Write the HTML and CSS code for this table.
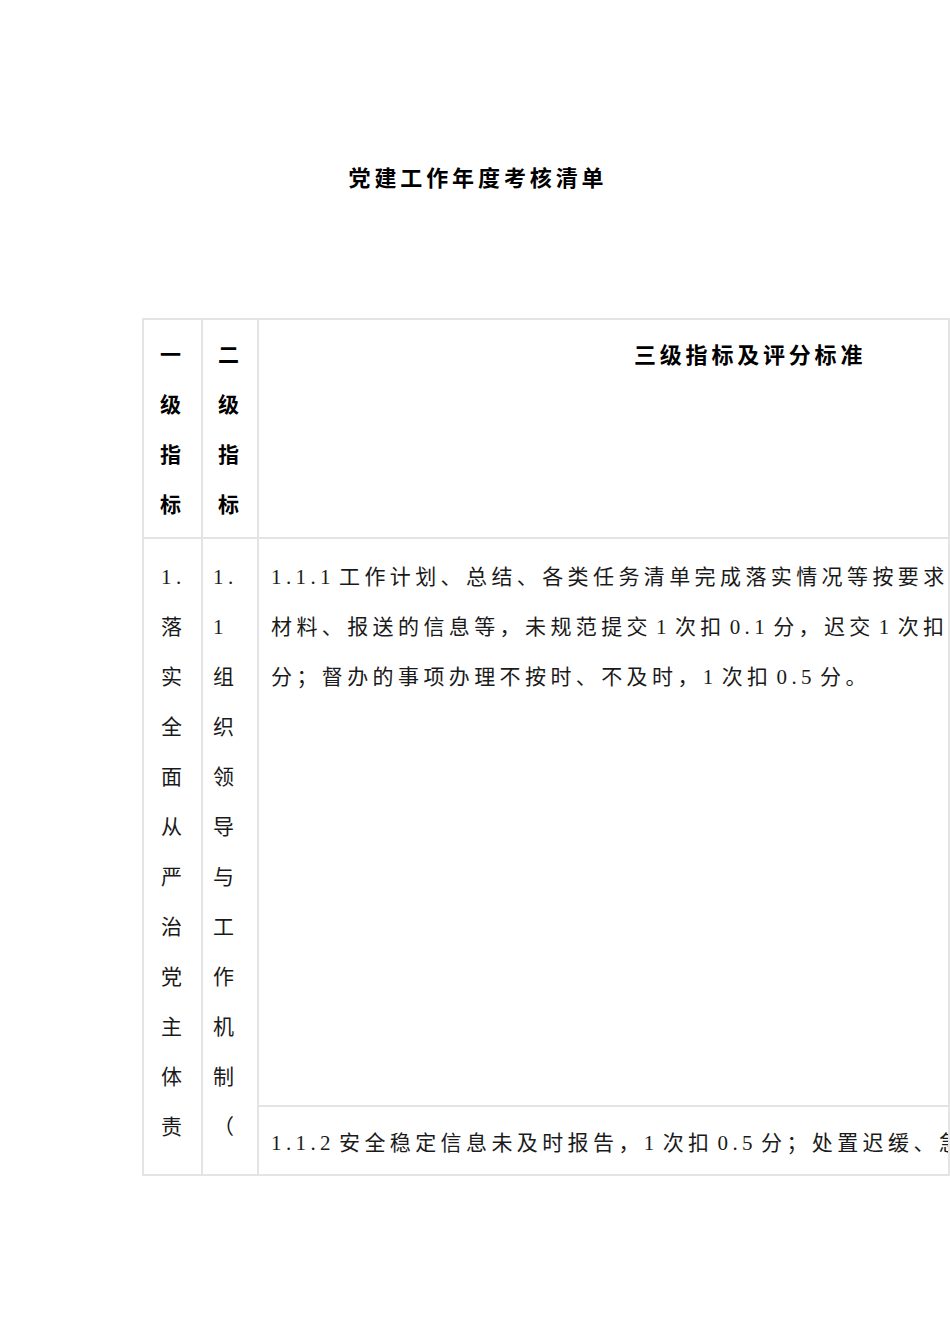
FILE: index.html
```html
<!DOCTYPE html>
<html lang="zh-CN">
<head>
<meta charset="utf-8">
<title>党建工作年度考核清单</title>
<link rel="stylesheet" href="styles.css">
</head>
<body>
<div class="page">
  <h1 class="title">党建工作年度考核清单</h1>
  <table class="sheet">
    <colgroup>
      <col class="c1">
      <col class="c2">
      <col class="c3">
    </colgroup>
    <tr class="head">
      <td class="h1">一<br>级<br>指<br>标</td>
      <td class="h2">二<br>级<br>指<br>标</td>
      <td class="h3"><div class="clip">三级指标及评分标准</div></td>
    </tr>
    <tr class="r1">
      <td class="b1" rowspan="2">1.<br>落<br>实<br>全<br>面<br>从<br>严<br>治<br>党<br>主<br>体<br>责</td>
      <td class="b2" rowspan="2">1.<br>1<br>组<br>织<br>领<br>导<br>与<br>工<br>作<br>机<br>制<br>（</td>
      <td class="b3 top"><div class="clip">
        <div class="line"><span class="n first">1.1.1</span>工作计划、总结、各类任务清单完成落实情况等按要求</div>
        <div class="line">材料、报送的信息等，未规范提交<span class="n">1</span>次扣<span class="n">0.1</span>分，迟交<span class="n">1</span>次扣</div>
        <div class="line">分；督办的事项办理不按时、不及时，<span class="n first">1</span>次扣<span class="n">0.5</span>分。</div>
      </div></td>
    </tr>
    <tr class="r2">
      <td class="b3 sub"><div class="clip">
        <div class="line"><span class="n first">1.1.2</span>安全稳定信息未及时报告，<span class="n first">1</span>次扣<span class="n">0.5</span>分；处置迟缓、急</div>
      </div></td>
    </tr>
  </table>
</div>
</body>
</html>
```

FILE: styles.css
```css
html, body {
  margin: 0;
  padding: 0;
  background: #ffffff;
  overflow: hidden;
}

body {
  width: 950px;
  height: 1344px;
  color: #1a1a1a;
  font-family: "Liberation Serif", "Noto Sans CJK SC", serif;
}

.page {
  padding-top: 158px;
}

.title {
  margin: 0;
  padding-left: 6px;
  height: 36px;
  line-height: 36px;
  text-align: center;
  font-family: "Noto Sans CJK SC", sans-serif;
  font-weight: 700;
  font-size: 22px;
  letter-spacing: 3.9px;
  color: #000;
}

.sheet {
  margin-top: 124px;
  margin-left: 142px;
  width: 808px;
  table-layout: fixed;
  border-collapse: collapse;
  font-size: 21px;
  letter-spacing: 4.4px;
  line-height: 50px;
}

.c1 { width: 59px; }
.c2 { width: 56px; }

.sheet td {
  border: 2px solid #e4e4e4;
  vertical-align: top;
  padding: 0;
  white-space: nowrap;
}

.head td {
  height: 219px;
  box-sizing: border-box;
  font-family: "Noto Sans CJK SC", sans-serif;
  font-weight: 700;
  color: #000;
}

.h1 { padding: 8px 0 0 16px !important; }
.h2 { padding: 8px 0 0 15px !important; }
.h3 {
  padding: 8px 0 0 375px !important;
  font-size: 22px;
  letter-spacing: 3.8px;
}

.b1 { padding: 13px 0 0 17px !important; }
.b2 { padding: 13px 0 0 10px !important; }

.b3.top {
  height: 568px;
  box-sizing: border-box;
  padding: 13px 0 0 12px !important;
}

.b3.sub {
  height: 69px;
  box-sizing: border-box;
  padding: 11px 0 0 12px !important;
}

.clip {
  overflow: hidden;
}

.line {
  white-space: nowrap;
}

.n {
  margin: 0 4px;
}

.n.first {
  margin-left: 0;
}
```
